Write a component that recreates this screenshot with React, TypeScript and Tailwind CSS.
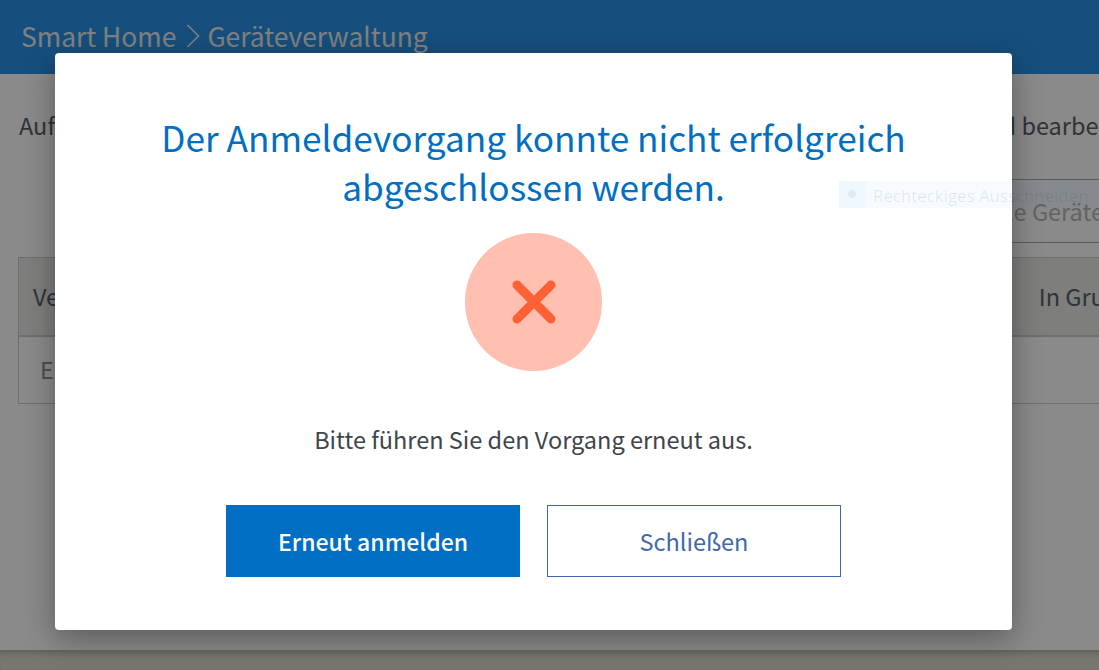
const font = { fontFamily: '"Noto Sans CJK SC", "Noto Sans", sans-serif' };

export default function App() {
  return (
    <div
      className="relative flex h-[670px] w-[1099px] flex-col overflow-hidden bg-white text-[#5a6068]"
      style={font}
    >
      <header className="flex h-[74px] shrink-0 items-center bg-[#2a92e7] pb-[2px] pl-[21px] text-[26.4px] leading-[36px] text-[#ececec]">
        <span>Smart Home</span>
        <svg className="ml-[10px] mr-[7px]" width="14" height="24" viewBox="0 0 14 24" fill="none" stroke="#ececec" strokeWidth="1.6">
          <path d="M1.5 1 L12.5 12 L1.5 23" />
        </svg>
        <span>Geräteverwaltung</span>
      </header>
      <main className="flex min-h-0 flex-1 flex-col pl-[18px]">
        <div className="mt-[34px] flex whitespace-nowrap pl-[1px] text-[23.5px] leading-[34px]">
          <span className="w-[954px] shrink-0">Auf dieser Seite können Sie Ihre Geräte sehen</span>
          <span>und bearbeiten</span>
        </div>
        <div className="mt-[37px] flex justify-end">
          <div className="-mr-[76px] flex h-[64px] w-[260px] shrink-0 items-center justify-center border border-[#aaa] pt-[1px] text-[23.5px] text-[#b8b8b8]">
            Alle Geräte
          </div>
        </div>
        <div className="mt-[14px] w-[1200px] border border-[#ccc]">
          <div className="flex h-[79px] items-center justify-between border-b-2 border-[#ccc] bg-[#e9e9e6] pl-[14px] pr-[70px] text-[23.5px]">
            <span>Verfügbare Geräte</span>
            <span>In Gruppe</span>
          </div>
          <div className="flex h-[66px] items-center pl-[21px] text-[23.5px] text-[#8f8f8f]">
            Es sind keine Geräte vorhanden
          </div>
        </div>
      </main>
      <footer className="h-[20px] shrink-0 bg-[#dddbce] shadow-[inset_0_7px_6px_-4px_rgba(0,0,0,0.2)]" />

      <div className="absolute inset-0 bg-black/[0.46]" />

      <div className="absolute left-[55px] top-[53px] flex h-[577px] w-[957px] flex-col items-center rounded-[4px] bg-white shadow-[0_8px_30px_rgba(0,0,0,0.35)]">
        <h1 className="mt-[59px] w-[800px] text-center text-[35.2px] font-normal leading-[49px] text-[#006fc3]">
          Der Anmeldevorgang konnte nicht erfolgreich abgeschlossen werden.
        </h1>
        <div className="mt-[23px] flex h-[138px] w-[137px] items-center justify-center rounded-full bg-[#ffbfb1]">
          <svg width="44" height="44" viewBox="0 0 44 44" fill="none" stroke="#ff6137" strokeWidth="9" strokeLinecap="round">
            <path d="M5 5 L39 39 M39 5 L5 39" />
          </svg>
        </div>
        <p className="mt-[51px] text-[23.5px] leading-[34px] text-[#40454b]">
          Bitte führen Sie den Vorgang erneut aus.
        </p>
        <div className="mt-[49px] flex gap-[27px]">
          <button className="h-[72px] w-[294px] bg-[#006fc3] text-[23px] font-medium text-white">
            Erneut anmelden
          </button>
          <button className="h-[72px] w-[294px] border border-[#3f69ac] bg-white pt-[1px] text-[23.5px] text-[#3f69ac]">
            Schließen
          </button>
        </div>
      </div>

      <div className="absolute left-[839px] top-[181px] flex h-[27px] w-[260px] items-center bg-[#0080ff]/[0.03] text-black/[0.09]">
        <span className="flex h-full w-[27px] shrink-0 items-center justify-center bg-[#0080ff]/[0.03] pb-[1px]">
          <span className="h-[8px] w-[8px] -translate-x-[1px] rounded-full bg-black/[0.06]" />
        </span>
        <span className="ml-[7px] whitespace-nowrap pt-[2px] text-[16.85px] leading-[24px]" style={{ fontFamily: '"Open Sans", sans-serif' }}>
          Rechteckiges Ausschneiden
        </span>
      </div>
    </div>
  );
}
